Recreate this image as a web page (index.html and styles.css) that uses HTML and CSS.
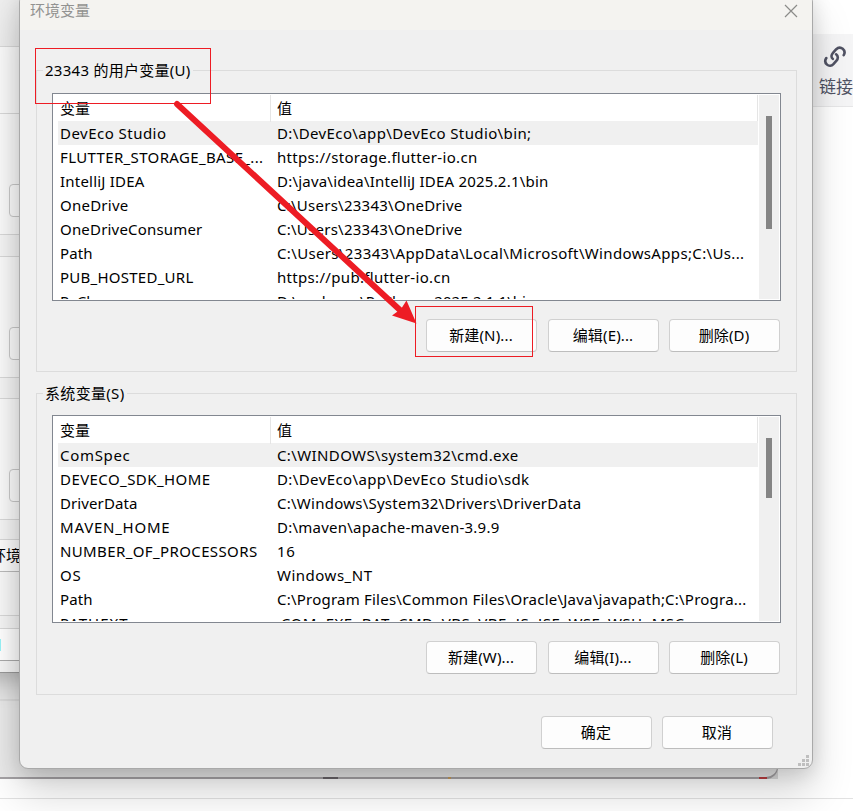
FILE: index.html
```
<!DOCTYPE html>
<html lang="zh-CN">
<head>
<meta charset="utf-8">
<title>环境变量</title>
<link rel="stylesheet" href="styles.css">
</head>
<body>
<div class="desktop">
  <div class="page-line"></div>
  <aside class="toolbar">
    <svg class="link-icon" width="24" height="24" viewBox="0 0 24 24" fill="none" stroke="#505263" stroke-width="2.6" stroke-linecap="round">
      <path d="M9.800 13.900C7.900 12.200 8.300 9.700 10 7.800L13 4.500C15 2.500 17.700 2.200 19.700 3.800C21.800 5.600 22 8 20.700 10.100"/>
      <path d="M13.100 9.300C15.300 11 15.300 13.600 13.500 15.700L10.400 19.200C8.600 21.100 5.900 21.300 4 19.600C2 17.800 1.900 15.100 3.300 13"/>
    </svg>
    <span>链接</span>
  </aside>
  <div class="back-corner"></div>
  <div class="back-window"><i class="speck dark"></i><i class="speck gold"></i><i class="speck red"></i></div>
  <div class="side-window">
    <div class="s-head"></div>
    <div class="s-gap"></div>
    <div class="s-box"><i></i></div><div class="s-between"></div>
    <div class="s-box"><i></i></div><div class="s-between short"></div>
    <div class="s-box"><i></i></div><div class="s-last"></div>
    <div class="s-button">环境</div>
    <div class="s-pad"></div>
    <div class="s-strip"></div>
    <div class="s-apply"><b></b></div>
  </div>

  <main class="dialog">
    <header><span>环境变量</span>
      <svg width="14" height="14" viewBox="0 0 14 14" stroke="#8b8b89" stroke-width="1.200"><path d="M1 1l12 12M13 1L1 13"/></svg>
    </header>
    <fieldset class="user">
      <legend data-w="145">23343 的用户变量(U)</legend>
      <div class="list">
        <div class="table">
          <div class="row th"><span>变量</span><span>值</span></div>
          <div class="row sel"><span data-w="106">DevEco Studio</span><span data-w="254">D:\DevEco\app\DevEco Studio\bin;</span></div>
          <div class="row"><span data-w="203">FLUTTER_STORAGE_BASE_...</span><span data-w="200">https://storage.flutter-io.cn</span></div>
          <div class="row"><span data-w="84">IntelliJ IDEA</span><span data-w="271">D:\java\idea\IntelliJ IDEA 2025.2.1\bin</span></div>
          <div class="row"><span data-w="68">OneDrive</span><span data-w="185">C:\Users\23343\OneDrive</span></div>
          <div class="row"><span data-w="142">OneDriveConsumer</span><span data-w="185">C:\Users\23343\OneDrive</span></div>
          <div class="row"><span data-w="32">Path</span><span data-w="467">C:\Users\23343\AppData\Local\Microsoft\WindowsApps;C:\Us...</span></div>
          <div class="row"><span data-w="133">PUB_HOSTED_URL</span><span data-w="173">https://pub.flutter-io.cn</span></div>
          <div class="row"><span data-w="64">PyCharm</span><span data-w="262">D:\pycharm\PyCharm 2025.2.1.1\bin;</span></div>
        </div>
        <div class="scroll"><i class="thumb-user"></i></div>
      </div>
      <div class="buttons"><button>新建(N)...</button><button>编辑(E)...</button><button>删除(D)</button></div>
    </fieldset>
    <fieldset class="system">
      <legend data-w="79">系统变量(S)</legend>
      <div class="list">
        <div class="table">
          <div class="row th"><span>变量</span><span>值</span></div>
          <div class="row sel"><span data-w="70">ComSpec</span><span data-w="241">C:\WINDOWS\system32\cmd.exe</span></div>
          <div class="row"><span data-w="150">DEVECO_SDK_HOME</span><span data-w="252">D:\DevEco\app\DevEco Studio\sdk</span></div>
          <div class="row"><span data-w="77">DriverData</span><span data-w="304">C:\Windows\System32\Drivers\DriverData</span></div>
          <div class="row"><span data-w="110">MAVEN_HOME</span><span data-w="222">D:\maven\apache-maven-3.9.9</span></div>
          <div class="row"><span data-w="197">NUMBER_OF_PROCESSORS</span><span data-w="18">16</span></div>
          <div class="row"><span data-w="21">OS</span><span data-w="95">Windows_NT</span></div>
          <div class="row"><span data-w="32">Path</span><span data-w="469">C:\Program Files\Common Files\Oracle\Java\javapath;C:\Progra...</span></div>
          <div class="row"><span data-w="68">PATHEXT</span><span data-w="407">.COM;.EXE;.BAT;.CMD;.VBS;.VBE;.JS;.JSE;.WSF;.WSH;.MSC</span></div>
        </div>
        <div class="scroll"><i class="thumb-system"></i></div>
      </div>
      <div class="buttons"><button>新建(W)...</button><button>编辑(I)...</button><button>删除(L)</button></div>
    </fieldset>
    <footer class="buttons"><button>确定</button><button>取消</button></footer>
    <svg class="grip" width="12" height="12" fill="#bfbfbf"><path d="M8 0h3v3h-3zM4 4h3v3h-3zM8 4h3v3h-3zM0 8h3v3h-3zM4 8h3v3h-3zM8 8h3v3h-3z"/></svg>
  </main>

  <svg class="marks" width="853" height="811" fill="none" stroke="#ed1c24">
    <rect x="35.500" y="48.500" width="175" height="55"/>
    <rect x="415.500" y="306.500" width="117" height="50"/>
    <path d="M177 104L401 311" stroke-width="6" stroke-linecap="round"/>
    <path d="M416.500 323.500L406.500 300.500L401 309L392 315.500Z" fill="#ed1c24" stroke="none"/>
  </svg>
</div>
<script src="fit.js"></script>
</body>
</html>
```
FILE: fit.js
```
document.querySelectorAll('[data-w]').forEach(function (el) {
  var range = document.createRange();
  range.selectNodeContents(el);
  var natural = range.getBoundingClientRect().width;
  el.style.letterSpacing = ((Number(el.dataset.w) + 0.5 - natural) / el.textContent.length) + 'px';
});
```
FILE: styles.css
```
* { box-sizing: border-box; }
body { margin: 0; font: 15px/24px "Noto Sans", "Noto Sans CJK SC", sans-serif; color: #000; }
.desktop { position: relative; width: 853px; height: 811px; overflow: hidden; background: #fff; }
.page-line { position: absolute; top: 798px; width: 100%; border-top: 1px solid #e2e2e2; }
.toolbar { position: absolute; top: 34px; right: 0; width: 60px; height: 73px; background: #f5f5f6; border-bottom: 1px solid #e7e7e8; padding: 11px 0 0 26px; color: #505263; font-size: 17px; line-height: 24px; white-space: nowrap; }
.toolbar .link-icon { display: block; margin: 0 0 6px 4px; }
.back-corner { position: absolute; left: 758px; top: 759px; width: 20px; height: 20px; background: #dcdcdc; }
.back-window { position: absolute; left: -20px; top: 0; width: 798px; height: 779px; background: #eaeaea; border: solid #a5a2a5; border-width: 0 1px 2px 0; border-radius: 0 0 12px 0; }
.back-window::before { content: ""; position: absolute; top: 699px; width: 100%; height: 2px; background: #ddd; }
.speck { position: absolute; bottom: -2px; height: 2px; }
.dark { left: 343px; width: 15px; background: #686368; }
.gold { left: 468px; width: 3px; background: #c49b5b; }
.red { right: 10px; width: 8px; background: #b93e40; }
.side-window { position: absolute; left: -100px; top: 0; width: 300px; height: 673px; display: flex; flex-direction: column; background: #f5f5f5; border-bottom: 1px solid #999; box-shadow: 0 8px 24px rgba(0,0,0,.25); }
.side-window > div { flex: none; border-bottom: 1px solid #d8d8d8; }
.s-head { height: 47px; background: #ededed; }
.s-gap { height: 67px; background: #fafafa; }
.s-box { height: 121px; padding: 70px 0 0 109px; background: #fafafa; }
.s-box i { display: block; width: 70px; height: 33px; border: 1px solid #c9c9c9; border-radius: 4px; background: #fdfdfd; }
.s-between { height: 22px; }
.side-window .short { height: 21px; }
.s-last { height: 20px; }
.side-window .s-button { height: 32px; padding-left: 91px; line-height: 30px; background: #fcfcfc; border-color: #bbb; }
.s-pad { height: 44px; background: #f8f8f8; }
.s-strip { height: 13px; }
.side-window .s-apply { height: 32px; padding-top: 10px; background: #fff; border-color: #aaa; }
.s-apply b { display: block; width: 101px; height: 12px; background: #98f3f8; }
.dialog { position: absolute; left: 19px; top: -7px; width: 794px; height: 776px; background: #f0f0f0; border: 1px solid #a9a9a9; border-radius: 9px; box-shadow: 0 24px 40px rgba(0,0,0,.17), 0 3px 20px rgba(0,0,0,.14); }
.dialog header { height: 36px; padding: 0 14px 3px 10px; display: flex; justify-content: space-between; align-items: center; background: #f4f3f0; border-radius: 8px 8px 0 0; color: #929291; }
.dialog header span { position: relative; top: -1px; }
fieldset { min-width: 0; margin: 0 15px 0 16px; border: 1px solid #dcdcdc; padding: 0 16px 0 15px; }
legend { margin-left: -9px; padding: 0 2px; width: max-content; line-height: 24px; white-space: nowrap; }
.user { margin-top: 28px; height: 314px; }
.system { margin-top: 9px; height: 314px; }
.list { display: flex; width: 729px; height: 208px; margin-top: 10px; border: 1px solid #828790; background: #fff; padding: 1px; overflow: hidden; }
.user .list { margin-top: 11px; }
.table { width: 704px; flex: none; padding-left: 4px; height: 204px; overflow: hidden; }
.row { display: grid; grid-template-columns: 213px 1fr; height: 24px; line-height: 24px; padding-left: 2px; white-space: nowrap; }
.row span + span { padding-left: 4px; }
.row.th { height: 26px; line-height: 27px; border-right: 1px solid #e5e5e5; }
.th span + span { border-left: 1px solid #e5e5e5; margin-left: -3px; padding-left: 6px; }
.sel { background: #f0f0f0; }
.scroll { width: 20px; flex: none; background: #f0f0f0; margin-left: 1px; overflow: hidden; }
.scroll i { display: block; width: 6px; margin: 21px 0 0 7px; background: #858585; }
.thumb-user { height: 113px; }
.thumb-system { height: 60px; }
.buttons { display: flex; justify-content: flex-end; gap: 10px; margin-top: 18px; }
button { width: 111px; height: 33px; padding: 0 1px 2px 0; font: inherit; letter-spacing: .15px; color: #000; background: #fdfdfd; border: 1px solid #d0d0d0; border-bottom-color: #bdbdbd; border-radius: 4px; }
button:first-child:nth-last-child(3) { margin-right: 1px; }
footer.buttons { margin: 21px 39px 0 0; }
.grip { position: absolute; right: 2px; bottom: 1px; }
.marks { position: absolute; left: 0; top: 0; }
```
